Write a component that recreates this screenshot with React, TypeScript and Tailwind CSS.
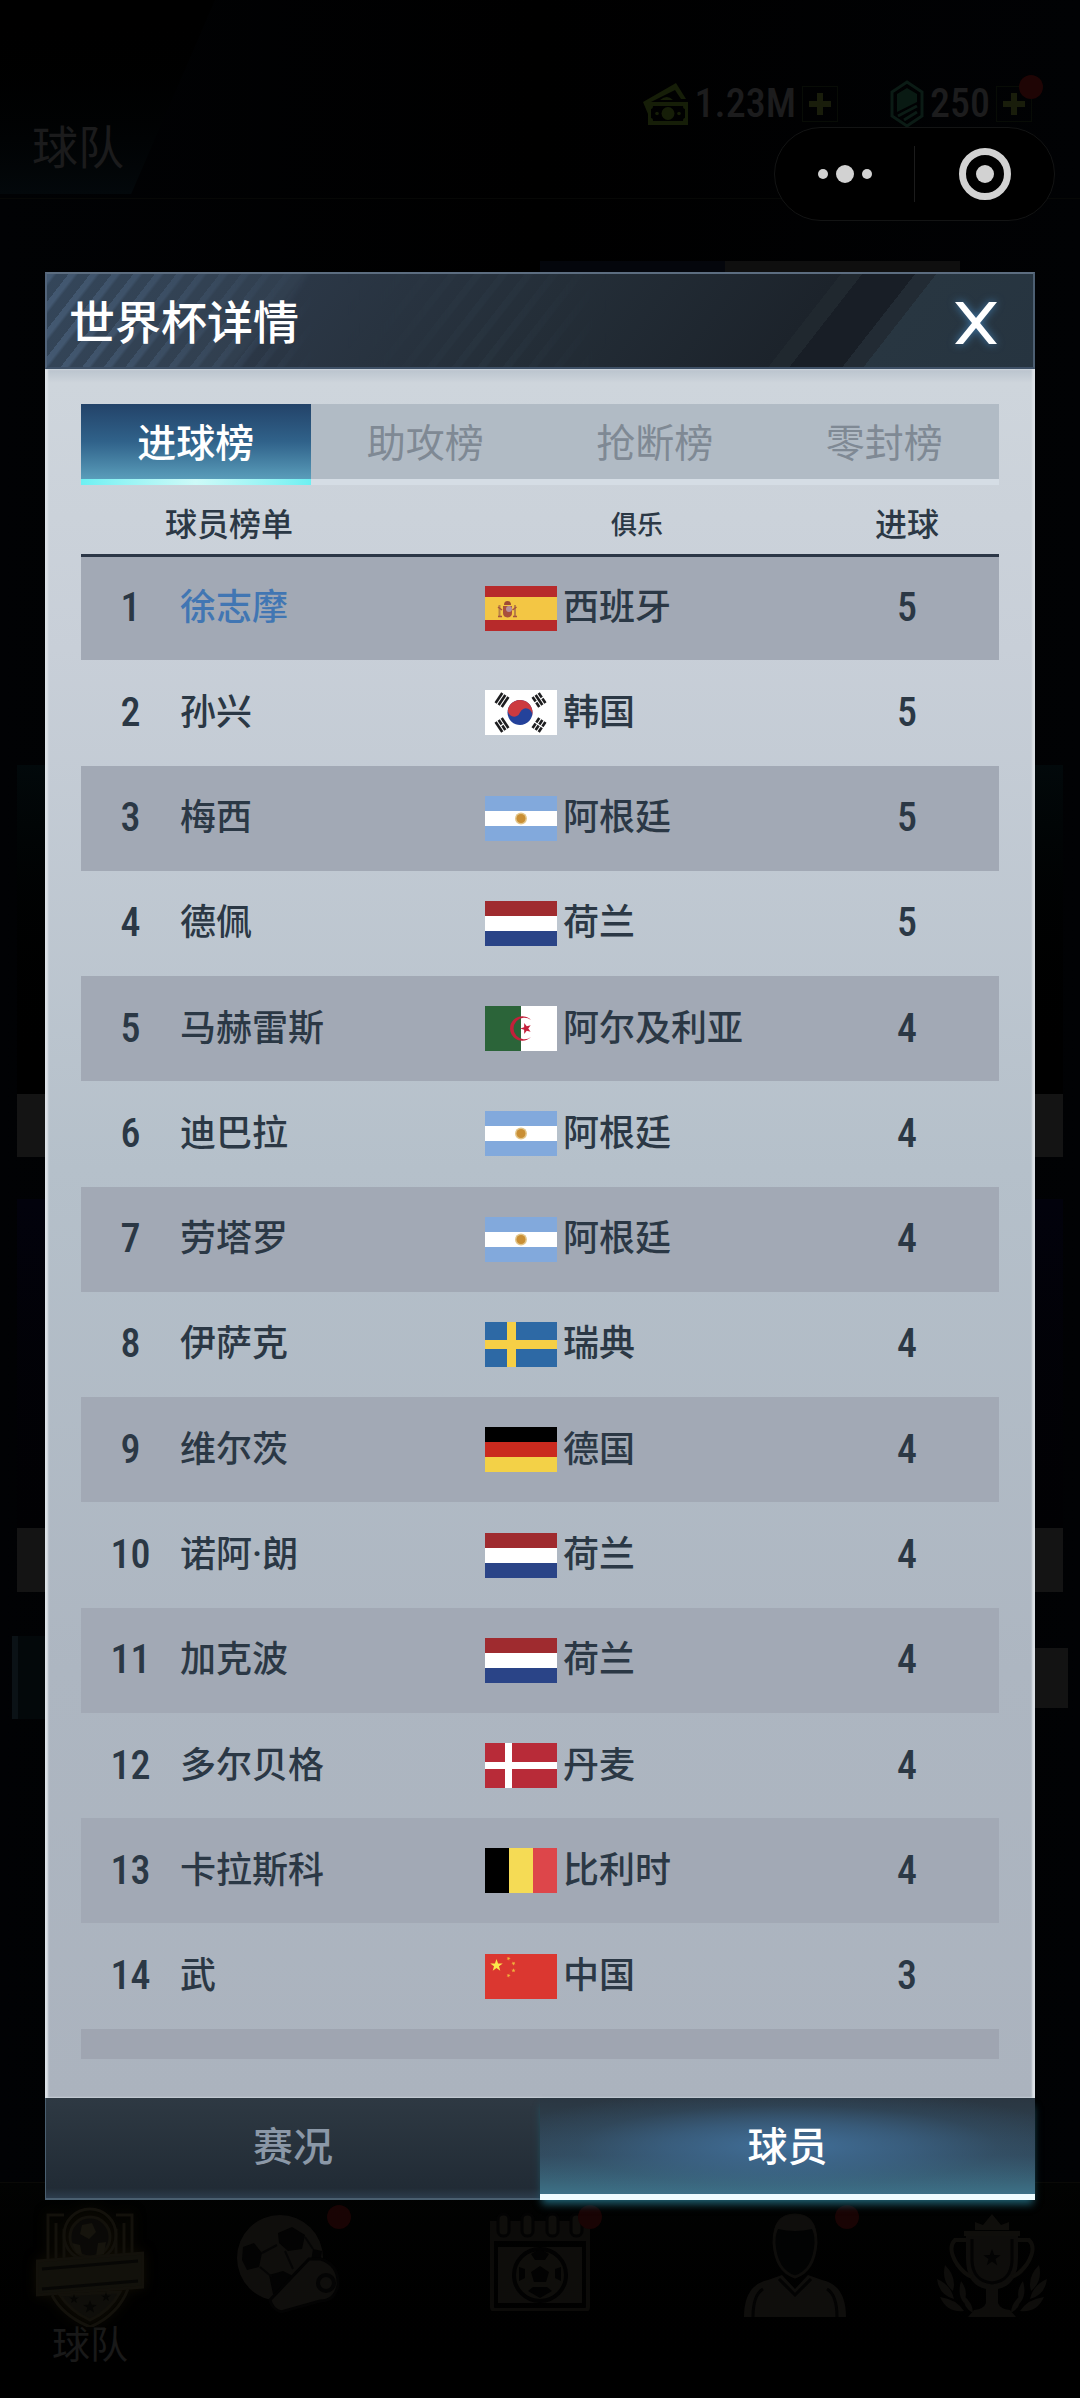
import { ReactNode, useState } from 'react';
import clsx from 'clsx';

type Country = 'es' | 'kr' | 'ar' | 'nl' | 'dz' | 'se' | 'de' | 'dk' | 'be' | 'cn';

interface PlayerRow {
  name: string;
  country: Country;
  goals: number;
  highlighted?: boolean;
}

const COUNTRY_NAMES: Record<Country, string> = {
  es: '西班牙',
  kr: '韩国',
  ar: '阿根廷',
  nl: '荷兰',
  dz: '阿尔及利亚',
  se: '瑞典',
  de: '德国',
  dk: '丹麦',
  be: '比利时',
  cn: '中国',
};

const PLAYERS: PlayerRow[] = [
  { name: '徐志摩', country: 'es', goals: 5, highlighted: true },
  { name: '孙兴', country: 'kr', goals: 5 },
  { name: '梅西', country: 'ar', goals: 5 },
  { name: '德佩', country: 'nl', goals: 5 },
  { name: '马赫雷斯', country: 'dz', goals: 4 },
  { name: '迪巴拉', country: 'ar', goals: 4 },
  { name: '劳塔罗', country: 'ar', goals: 4 },
  { name: '伊萨克', country: 'se', goals: 4 },
  { name: '维尔茨', country: 'de', goals: 4 },
  { name: '诺阿·朗', country: 'nl', goals: 4 },
  { name: '加克波', country: 'nl', goals: 4 },
  { name: '多尔贝格', country: 'dk', goals: 4 },
  { name: '卡拉斯科', country: 'be', goals: 4 },
  { name: '武', country: 'cn', goals: 3 },
];

const BOARD_TABS = ['进球榜', '助攻榜', '抢断榜', '零封榜'];
const VIEW_TABS = ['赛况', '球员'];

const STAR = 'M0-5 1.2-1.6 4.8-1.5 1.9.6 2.9 4 0 2-2.9 4-1.9.6-4.8-1.5-1.2-1.6Z';

function Trigram({ x, y, angle, broken }: { x: number; y: number; angle: number; broken: number[] }) {
  return (
    <g transform={`translate(${x} ${y}) rotate(${angle})`} fill="#1d1d1f">
      {[-5, -1.3, 2.4].map((offset, index) =>
        broken.includes(index) ? (
          <g key={offset}>
            <rect x="-6" y={offset} width="5.4" height="2.6" />
            <rect x="0.6" y={offset} width="5.4" height="2.6" />
          </g>
        ) : (
          <rect key={offset} x="-6" y={offset} width="12" height="2.6" />
        ),
      )}
    </g>
  );
}

const FLAG_ART: Record<Country, ReactNode> = {
  es: (
    <>
      <rect width="72" height="45" fill="#b72a2b" />
      <rect y="11" width="72" height="23" fill="#f3c644" />
      <path d="M18 20h9v7q0 4-4.500 4.500Q18 31 18 27Z" fill="#a8503c" />
      <path d="M19 19q0-4 3.500-4t3.500 4Z" fill="#9d4a35" />
      <circle cx="24" cy="23" r="3" fill="#b58f9c" />
      <path d="M14.500 19v11M30 19v11" stroke="#b98246" strokeWidth="2" />
      <path d="M13 30.500h4M28 30.500h4M13 21l4 3M31.500 21l-4 3" stroke="#a5523f" strokeWidth="1.500" />
    </>
  ),
  kr: (
    <>
      <rect width="72" height="45" fill="#fff" />
      <g transform="rotate(20 35 22.500)">
        <circle cx="35" cy="22.500" r="12.500" fill="#24429b" />
        <path d="M22.500 22.500a12.500 12.500 0 0 1 25 0a6.250 6.250 0 0 0-12.500 0a6.250 6.250 0 0 1-12.500 0Z" fill="#cc3a40" />
      </g>
      <Trigram x={17} y={10} angle={-56} broken={[]} />
      <Trigram x={54} y={10} angle={56} broken={[0, 2]} />
      <Trigram x={17} y={35} angle={56} broken={[1]} />
      <Trigram x={54} y={35} angle={-56} broken={[0, 1, 2]} />
    </>
  ),
  ar: (
    <>
      <rect width="72" height="45" fill="#82a9dc" />
      <rect y="15" width="72" height="15" fill="#fff" />
      <circle cx="36" cy="22.500" r="6" fill="#e3c68a" />
      <circle cx="36" cy="22.500" r="4.500" fill="#c98f35" />
    </>
  ),
  nl: (
    <>
      <rect width="72" height="45" fill="#fff" />
      <rect width="72" height="15" fill="#9f2b2f" />
      <rect y="30" width="72" height="15" fill="#2a4487" />
    </>
  ),
  dz: (
    <>
      <rect width="72" height="45" fill="#fff" />
      <rect width="36" height="45" fill="#2b6439" />
      <path d="M46 14A12.200 12.200 0 1 0 46 31A10.800 10.800 0 1 1 46 14Z" fill="#c4203a" />
      <path d={STAR} transform="translate(41 22.500) rotate(-18) scale(1.150)" fill="#c4203a" />
    </>
  ),
  se: (
    <>
      <rect width="72" height="45" fill="#2d69a5" />
      <path d="M22 0h9v18h41v9H31v18h-9V27H0v-9h22Z" fill="#f6cf46" />
    </>
  ),
  de: (
    <>
      <rect width="72" height="15" fill="#000" />
      <rect y="15" width="72" height="15" fill="#ca2a1e" />
      <rect y="30" width="72" height="15" fill="#f3d147" />
    </>
  ),
  dk: (
    <>
      <rect width="72" height="45" fill="#b82b38" />
      <path d="M20 0h7v19h45v7H27v19h-7V26H0v-7h20Z" fill="#fff" />
    </>
  ),
  be: (
    <>
      <rect width="24" height="45" fill="#000" />
      <rect x="24" width="24" height="45" fill="#f5db55" />
      <rect x="48" width="24" height="45" fill="#dd464a" />
    </>
  ),
  cn: (
    <>
      <rect width="72" height="45" fill="#db3730" />
      <path d={STAR} transform="translate(11.500 11.500) scale(1.300)" fill="#fbe84b" />
      <g fill="#f0b43c">
        <path d={STAR} transform="translate(23.500 4.500) rotate(20) scale(.45)" />
        <path d={STAR} transform="translate(28.500 9.500) rotate(40) scale(.45)" />
        <path d={STAR} transform="translate(28.500 16.500) scale(.45)" />
        <path d={STAR} transform="translate(23.500 21.500) rotate(20) scale(.45)" />
      </g>
    </>
  ),
};

function Flag({ country }: { country: Country }) {
  return (
    <svg viewBox="0 0 72 45" className="h-[45px] w-[72px] shrink-0" aria-hidden="true">
      {FLAG_ART[country]}
    </svg>
  );
}

function CashIcon() {
  return (
    <svg viewBox="0 0 46 44" className="h-11 w-[46px]" fill="#161e08" aria-hidden="true">
      <path d="M0 20 33 1l10 16h-5l-6-9L8 20l-3 3v9Z" />
      <path d="M17 18q7-6 13 0Z" />
      <path fillRule="evenodd" d="M5 20h40v23H5Zm5 4q0 3-2 3v9q2 0 2 3h30q0-3 2-3v-9q-2 0-2-3Z" />
      <circle cx="25" cy="31.500" r="6.500" />
      <circle cx="14" cy="31.500" r="1.800" />
      <circle cx="36" cy="31.500" r="1.800" />
    </svg>
  );
}

function GemIcon() {
  return (
    <svg viewBox="0 0 34 48" className="h-12 w-[34px]" fill="none" stroke="#0b1b15" strokeWidth="3" aria-hidden="true">
      <path d="M17 2 32 12v24L17 46 2 36V12Z" />
      <path d="M17 8 27 14v8L7 32V14Z" fill="#091a13" stroke="none" />
      <path d="M8 36 27 26M14 40l13-8" />
    </svg>
  );
}

function AddButton({ label, dot }: { label: string; dot?: boolean }) {
  return (
    <button type="button" aria-label={label} className="relative flex size-9 items-center justify-center border border-[#080c06]">
      <svg viewBox="0 0 22 22" className="size-[22px]" aria-hidden="true">
        <path d="M8 0h6v8h8v6h-8v8H8v-8H0V8h8Z" fill="#191d0b" />
      </svg>
      {dot ? <span className="absolute -top-3 -right-3 size-6 rounded-full bg-[#1f0505]" /> : null}
    </button>
  );
}

function CrestIcon() {
  return (
    <svg viewBox="0 0 108 122" className="h-[122px] w-[108px] drop-shadow-[0_0_6px_#0f0c03]" fill="none" stroke="#13110b" strokeWidth="3" aria-hidden="true">
      <path d="M12 58V10h16M96 58V10H80M20 55V18M88 55V18M28 55V24M80 55V24" />
      <circle cx="54" cy="30" r="26" />
      <circle cx="54" cy="32" r="20" fill="#0a0907" />
      <path d="M46 20l10-2 4 9-7 7-9-5ZM62 38l8-1-2 12-8 2ZM36 38l8 2 2 10-6-2Z" fill="#16140d" stroke="none" />
      <path d="M1 56 107 48v34L1 90Z" fill="#12110b" />
      <path d="M6 64 102 56M6 84l96-8" stroke="#070705" />
      <path d="M16 90q10 20 38 32 28-12 38-38" />
      <path d="M24 90q10 16 30 25 20-9 30-28Z" fill="#0f0e0a" />
      <g fill="#060604" stroke="none">
        <path d={STAR} transform="translate(38 94)" />
        <path d={STAR} transform="translate(70 92)" />
        <path d={STAR} transform="translate(54 102) scale(1.400)" />
      </g>
    </svg>
  );
}

function BallWhistleIcon() {
  return (
    <svg viewBox="0 0 104 100" className="h-[100px] w-[104px]" aria-hidden="true">
      <circle cx="45" cy="45" r="43" fill="#0f0e0c" />
      <g fill="#030303">
        <path d="M43 20 57 14l13 8-3 14-14 2-9-8ZM8 34l11-4 8 10-3 14-12 3-5-10ZM34 62l14-4 12 6-8 14-14 3ZM78 36l9 2-2 12-9-2Z" />
      </g>
      <path d="M27 40 42 32M50 38l8 18M25 54l12 10M70 24l8 12" stroke="#050505" strokeWidth="2" />
      <path d="M74 46h12q18 6 17 26-3 16-18 16L46 99q-9-3-11-12Z" fill="#0f0e0c" stroke="#030303" strokeWidth="3" />
      <circle cx="91" cy="70" r="8" fill="none" stroke="#040404" strokeWidth="4" />
    </svg>
  );
}

function CalendarIcon() {
  return (
    <svg viewBox="0 0 100 98" className="h-[98px] w-[100px]" aria-hidden="true">
      <path d="M2 10h96v84q0 3-3 3H5q-3 0-3-3Z" fill="none" stroke="#0c0b09" strokeWidth="4" />
      <path d="M2 10h96v18H2Z" fill="#0c0b09" />
      <g fill="#0f0e0b" stroke="#030303" strokeWidth="3">
        <rect x="8" y="1" width="11" height="22" rx="5" />
        <rect x="32" y="1" width="11" height="22" rx="5" />
        <rect x="57" y="1" width="11" height="22" rx="5" />
        <rect x="81" y="1" width="11" height="22" rx="5" />
      </g>
      <path d="M8 34h84v56H8Z" fill="#0e0d0b" />
      <circle cx="50" cy="62" r="26" fill="#0f0e0b" stroke="#020202" strokeWidth="4" />
      <path d="m50 53 9 6-3 10H44l-3-10ZM50 36l9 5-4 6H45l-4-6ZM29 54l6 2v9l-6 3ZM71 54l-6 2v9l6 3ZM38 78l5-4h14l5 4-12 7Z" fill="#020202" />
    </svg>
  );
}

function PlayerIcon() {
  return (
    <svg viewBox="0 0 104 104" className="h-[104px] w-[104px]" aria-hidden="true">
      <path d="M31 30q0-28 21-28t21 28q-2 28-21 34Q33 58 31 30Z" fill="#020303" stroke="#0e0d0b" strokeWidth="3" />
      <path d="M30 28Q30 1 52 1t22 27l-5-12q-17 4-34 0Z" fill="#0f0e0c" />
      <path d="M1 104q0-32 24-37l14-5 13 14 13-14 14 5q24 5 24 37Z" fill="#0f0e0c" />
      <path d="M10 104q0-22 10-28M94 104q0-22-10-28M36 66l16 16 16-16" fill="none" stroke="#030303" strokeWidth="3" />
    </svg>
  );
}

function TrophyIcon() {
  return (
    <svg viewBox="0 0 110 104" className="h-[104px] w-[110px]" aria-hidden="true">
      <path d="m38 9 8 3 9-11 9 11 8-3v8H38ZM27 18h56v5H27Z" fill="#0f0e0b" />
      <path d="M29 23h52v22q0 27-20 31v14q2 6 12 7l6 7H31l6-7q10-1 12-7V76Q29 72 29 45Z" fill="#0e0d0b" />
      <path d="M35 26v22q1 20 20 22 19-2 20-22V26" fill="none" stroke="#030303" strokeWidth="3" />
      <path d="M29 27H18q-8 8 2 24 7 10 15 13M81 27h11q8 8-2 24-7 10-15 13" fill="none" stroke="#0f0e0b" strokeWidth="4" />
      <path d={STAR} transform="translate(55 45) scale(1.800)" fill="#030303" />
      <g fill="#0e0d0b">
        <path d="M8 52q12 12 8 26Q4 68 8 52ZM0 66q14 6 17 20Q2 82 0 66ZM24 68q8 10 3 22-7-8-3-22ZM3 84q16 2 24 14Q10 100 3 84ZM26 82q10 8 10 18-10-5-10-18Z" />
        <path d="M102 52q-12 12-8 26 12-10 8-26ZM110 66q-14 6-17 20 15-4 17-20ZM86 68q-8 10-3 22 7-8 3-22ZM107 84q-16 2-24 14 17 2 24-14ZM84 82q-10 8-10 18 10-5 10-18Z" />
      </g>
    </svg>
  );
}

function NavItem({ label, icon, dot }: { label: string; icon: ReactNode; dot?: boolean }) {
  return (
    <button type="button" aria-label={label} className="flex justify-center self-start pt-2">
      <span className="relative">
        {icon}
        {dot ? <span className="absolute -top-2 -right-3 size-6 rounded-full bg-[#190404]" /> : null}
      </span>
    </button>
  );
}

// Team screen that stays dimmed under the dialog.
function TeamScreen() {
  return (
    <div className="absolute inset-0 flex flex-col bg-[linear-gradient(to_right,#010204,#000_50%,#010204)]">
      <header className="flex h-[199px] items-start justify-between border-b border-[#070806]">
        <div className="flex h-[194px] w-[215px] items-end bg-linear-to-b from-black to-[#03080b] pb-4 pl-8 [clip-path:polygon(0_0,100%_0,61%_100%,0_100%)]">
          <h1 className="text-[46px] leading-[60px] text-[#1b1b1c]">球队</h1>
        </div>
        <div className="flex items-center gap-[6px] pt-20 pr-12 font-['Roboto_Condensed','Roboto',sans-serif] text-[40px] leading-[48px] font-medium text-[#1c1c1d]">
          <CashIcon />
          <span>1.23M</span>
          <AddButton label="增加金币" />
          <span className="w-10" />
          <GemIcon />
          <span>250</span>
          <AddButton label="增加钻石" dot />
        </div>
      </header>

      <div className="flex justify-end pt-[62px] pr-[120px]">
        <div className="h-[100px] w-[185px] bg-[#04060c]" />
        <div className="h-[100px] w-[235px] bg-[#0f0f0f]" />
      </div>

      <div className="flex flex-col gap-[42px] px-[17px] pt-[404px]">
        <div className="border-b-[63px] border-[#141414] bg-linear-to-b from-[#02090b] to-black pt-[329px]" />
        <div className="border-b-[64px] border-[#141414] bg-linear-to-b from-[#02020c] to-[#010103] pt-[329px]" />
      </div>

      <div className="flex items-center justify-between px-3 pt-11">
        <div className="h-[83px] w-[200px] border-l-[6px] border-[#0b1216] bg-[#03080a]" />
        <div className="h-[60px] w-[200px] bg-[#131313]" />
      </div>

      <nav className="mt-auto grid h-[216px] grid-cols-[180fr_214fr_292fr_218fr_176fr] border-t border-[#0a0a07] bg-linear-to-b from-[#020302] to-black pt-[22px]">
        <button type="button" className="flex flex-col items-center self-start text-[38px] leading-[36px] text-[#191919]">
          <CrestIcon />
          球队
        </button>
        <NavItem label="比赛" icon={<BallWhistleIcon />} dot />
        <NavItem label="赛程" icon={<CalendarIcon />} dot />
        <NavItem label="球员" icon={<PlayerIcon />} dot />
        <NavItem label="荣誉" icon={<TrophyIcon />} />
      </nav>
    </div>
  );
}

function MiniProgramCapsule() {
  return (
    <div className="absolute top-[127px] right-[25px] flex h-[94px] w-[281px] items-center rounded-full border border-[#131414] bg-black">
      <button type="button" aria-label="更多" className="flex flex-1 items-center justify-center gap-2">
        <span className="size-[10px] rounded-full bg-[#d2d2d2]" />
        <span className="size-[18px] rounded-full bg-[#d2d2d2]" />
        <span className="size-[10px] rounded-full bg-[#d2d2d2]" />
      </button>
      <span className="h-14 w-px bg-[#1c1c1c]" />
      <button type="button" aria-label="关闭小程序" className="flex flex-1 justify-center">
        <span className="flex size-[52px] items-center justify-center rounded-full border-[7px] border-[#d2d2d2]">
          <span className="size-[18px] rounded-full bg-[#d2d2d2]" />
        </span>
      </button>
    </div>
  );
}

function DialogHeader() {
  return (
    <header className="relative flex h-[97px] items-center justify-between overflow-hidden border-2 border-t-[#5c6d80] border-r-[#4d5f72] border-b-[#3e5066] border-l-[#52647a] bg-[linear-gradient(128deg,#34465a_0%,#313f4f_24%,#2b3746_25%,#242e38_50%,#1c232b_75%,#20282f_75%,#20282f_77%,#181e26_77%,#181e26_82%,#222b34_82%,#222b34_84%,#283641_84%,#263440_100%)] pt-1 pr-9 pl-[22px]">
      <div className="absolute inset-y-0 left-0 w-[300px] bg-[repeating-linear-gradient(128deg,#4a617c_0px,#4a617c_5px,transparent_8px,transparent_17px)] mask-r-from-0% mask-r-to-90% opacity-70" />
      <div className="absolute inset-y-0 left-[300px] w-[260px] bg-[repeating-linear-gradient(128deg,#2c3945_0px,#2c3945_6px,transparent_8px,transparent_20px)] mask-r-from-40% mask-l-from-40% opacity-60" />
      <h2 className="relative text-[46px] leading-[60px] font-medium text-white">世界杯详情</h2>
      <button type="button" aria-label="关闭" className="relative">
        <svg viewBox="0 0 42 42" className="size-[42px] overflow-visible drop-shadow-[0_0_4px_#3f79aa]" aria-hidden="true">
          <path d="M0 0h8l13 16L34 0h8L25 21l17 21h-8L21 26 8 42H0l17-21Z" fill="#fff" />
        </svg>
      </button>
    </header>
  );
}

function ScorerTable() {
  return (
    <table className="h-[1574px] w-full table-fixed border-collapse text-[#2b3845]">
      <colgroup>
        <col className="w-[99px]" />
        <col className="w-[305px]" />
        <col />
        <col className="w-[184px]" />
      </colgroup>
      <thead>
        <tr className="h-[70px] border-b-[3px] border-[#2c3747] text-[32px] leading-[44px]">
          <th scope="col" colSpan={2} className="pt-3 pl-[84px] text-left font-medium">球员榜单</th>
          <th scope="col" className="pt-3 pr-[26px] text-[26px] font-medium">俱乐</th>
          <th scope="col" className="pt-3 font-medium">进球</th>
        </tr>
      </thead>
      <tbody>
        {PLAYERS.map((player, index) => (
          <tr key={player.name} className="h-[105px] text-4xl leading-[48px] font-medium odd:bg-[#a2a9b5]">
            <td className="text-center font-['Roboto_Condensed','Roboto',sans-serif] text-[40px]">{index + 1}</td>
            <td className={clsx(player.highlighted && 'text-[#4176b3]')}>{player.name}</td>
            <td>
              <div className="flex items-center gap-[6px]">
                <Flag country={player.country} />
                <span>{COUNTRY_NAMES[player.country]}</span>
              </div>
            </td>
            <td className="text-center font-['Roboto_Condensed','Roboto',sans-serif] text-[40px]">{player.goals}</td>
          </tr>
        ))}
        {/* top edge of the next row, cut off by the scroll area */}
        <tr aria-hidden="true" className="h-[30px] bg-[#9fa5b1]">
          <td colSpan={4} />
        </tr>
      </tbody>
    </table>
  );
}

export default function App() {
  const [board, setBoard] = useState(0);
  const [view, setView] = useState(1);

  return (
    <main lang="zh-CN" className="relative min-h-screen bg-black px-[45px] pt-[272px] pb-[198px] font-['Roboto','Noto_Sans_CJK_SC',sans-serif]">
      <TeamScreen />
      <MiniProgramCapsule />

      <section role="dialog" aria-label="世界杯详情" className="relative">
        <DialogHeader />

        <div className="bg-[linear-gradient(to_bottom,#b9c3cd_0px,#ced5dc_14px,#c8cfd8_280px,#b5c0ca_800px,#adb6c1_1300px,#abb3be_100%)] px-9 pt-[35px] pb-[39px] shadow-[inset_3px_0_2px_#dde2e7,inset_-3px_0_2px_#dde2e7]">
          <div role="tablist" className="grid grid-cols-4">
            {BOARD_TABS.map((tab, index) => (
              <button
                key={tab}
                type="button"
                role="tab"
                aria-selected={board === index}
                onClick={() => setBoard(index)}
                className="text-[39px] leading-[80px]"
              >
                <span
                  className={clsx(
                    'block h-[75px]',
                    board === index
                      ? 'bg-linear-to-b from-[#234369] via-[#30628a] to-[#5a9dba] font-medium text-white'
                      : 'bg-[#b1bbc5] text-[#7f8994]',
                  )}
                >
                  {tab}
                </span>
                <span
                  className={clsx(
                    'block h-[6px]',
                    board === index ? 'bg-linear-to-r from-[#6cf0f2] via-[#cdfaf8] to-[#6cf0f2]' : 'bg-[#d5dde5]',
                  )}
                />
              </button>
            ))}
          </div>
          <ScorerTable />
        </div>

        <div role="tablist" className="grid h-[102px] grid-cols-2">
          {VIEW_TABS.map((tab, index) => (
            <button
              key={tab}
              type="button"
              role="tab"
              aria-selected={view === index}
              onClick={() => setView(index)}
              className={clsx(
                'text-[40px] leading-[56px] font-medium',
                view === index
                  ? 'border-b-[6px] border-[#effcff] bg-[radial-gradient(ellipse_at_center,#416f99_0%,#3f6c9599_35%,#3d698f33_60%,transparent_85%),linear-gradient(to_bottom,#2a3641,#31495b_60%,#3d7187)] pt-1 text-white shadow-[0_6px_8px_-2px_#1f5f70]'
                  : 'border-b-2 border-l border-[#4a5f70] bg-[linear-gradient(to_bottom,#2e3943,#212b35_90%,#2c3c4c)] text-[#8b98a7]',
              )}
            >
              {tab}
            </button>
          ))}
        </div>
      </section>
    </main>
  );
}
